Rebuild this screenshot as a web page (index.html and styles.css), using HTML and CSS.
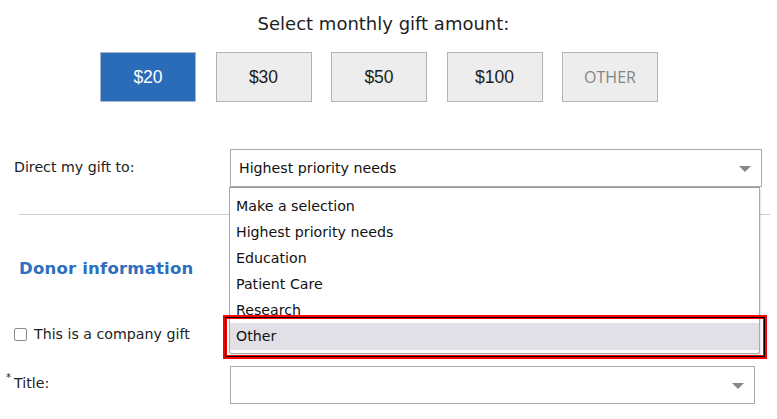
FILE: index.html
```html
<!DOCTYPE html>
<html>
<head>
<meta charset="utf-8">
<link rel="stylesheet" href="styles.css">
</head>
<body>
<div class="page">
  <h2 class="heading">Select monthly gift amount:</h2>
  <div class="amounts">
    <div class="amt active">$20</div>
    <div class="amt">$30</div>
    <div class="amt">$50</div>
    <div class="amt">$100</div>
    <div class="amt other">OTHER</div>
  </div>

  <div class="row direct">
    <div class="label">Direct my gift to:</div>
    <div class="field">
      <div class="select">
        <span>Highest priority needs</span>
        <span class="arrow"></span>
      </div>
      <ul class="options">
        <li>Make a selection</li>
        <li>Highest priority needs</li>
        <li>Education</li>
        <li>Patient Care</li>
        <li>Research</li>
        <li class="hover">Other</li>
      </ul>
      <div class="callout"></div>
    </div>
  </div>

  <hr class="divider">

  <h3 class="section">Donor information</h3>

  <label class="check"><span class="box"></span>This is a company gift</label>

  <div class="row title-row">
    <div class="label"><sup class="req">*</sup>Title:</div>
    <div class="field">
      <div class="select short">
        <span></span>
        <span class="arrow"></span>
      </div>
    </div>
  </div>
</div>
</body>
</html>
```

FILE: styles.css
```css
html, body {
  margin: 0;
  padding: 0;
  background: #fff;
}
body {
  font-family: "DejaVu Sans", Verdana, sans-serif;
  color: #222;
  width: 777px;
  height: 419px;
  overflow: hidden;
}
.page {
  position: relative;
}
.heading {
  margin: 0;
  padding-top: 13px;
  font-weight: normal;
  font-size: 18px;
  line-height: 22px;
  text-align: center;
  padding-right: 10px;
  color: #1e1e1e;
}
.amounts {
  display: flex;
  gap: 19.5px;
  margin-top: 17px;
  padding-left: 100px;
}
.amt {
  width: 94px;
  height: 48px;
  border: 1px solid #b3b3b3;
  background: #ededed;
  display: flex;
  align-items: center;
  justify-content: center;
  font-family: "Liberation Sans", Arial, sans-serif;
  font-size: 17.5px;
  color: #1c1c1c;
}
.amt.active {
  background: #2b6cb9;
  border-color: #a9b6c7;
  color: #fff;
}
.amt.other {
  color: #858585;
  font-family: "Open Sans", "Liberation Sans", sans-serif;
  font-size: 16px;
}
.row {
  display: grid;
  grid-template-columns: 216px 532px;
  padding-left: 14px;
}
.direct {
  margin-top: 47px;
}
.label {
  font-size: 14.2px;
  padding-top: 10px;
  color: #222;
}
.field {
  position: relative;
}
.select {
  height: 36px;
  border: 1px solid #aaa;
  display: flex;
  align-items: center;
  justify-content: space-between;
  padding: 0 10px 0 8px;
  font-size: 14.2px;
  color: #111;
  background: #fff;
}
.select.short {
  width: 505px;
}
.arrow {
  width: 0;
  height: 0;
  border-left: 6px solid transparent;
  border-right: 6px solid transparent;
  border-top: 6px solid #888;
  margin-top: 2px;
}
.options {
  position: absolute;
  left: -1px;
  top: 38px;
  width: 529px;
  margin: 0;
  padding: 5px 0 3px;
  list-style: none;
  background: #fff;
  border: 1px solid #aaa;
  border-top-color: #999;
  border-radius: 0 0 3px 3px;
  box-shadow: 1px 2px 2px rgba(0,0,0,0.12);
  z-index: 2;
  font-size: 14.2px;
  color: #111;
}
.options li {
  height: 26px;
  line-height: 26px;
  padding-left: 6px;
}
.options li.hover {
  background: #e0e0e6;
  height: 27px;
  line-height: 27px;
}
.callout {
  position: absolute;
  left: -7px;
  top: 166px;
  width: 540px;
  height: 40px;
  border: 2px solid #f00;
  box-shadow: inset 0 0 0 1px #000, inset 0 0 0 2px #f00;
  z-index: 3;
}
.divider {
  margin: 27px 7px 0 19px;
  border: 0;
  border-top: 1px solid #cfcfcf;
  height: 0;
}
.section {
  margin: 44px 0 0 19px;
  font-size: 16.5px;
  font-weight: bold;
  color: #2d6ebd;
  line-height: 20px;
  letter-spacing: 0.2px;
}
.check {
  display: flex;
  align-items: center;
  margin: 47px 0 0 14px;
  font-size: 14.2px;
  color: #222;
}
.box {
  width: 11px;
  height: 11px;
  border: 1.5px solid #8a8a94;
  border-radius: 2px;
  margin-right: 7px;
}
.title-row {
  margin-top: 24px;
}
.title-row .label {
  padding-top: 9px;
  position: relative;
}
.req {
  position: absolute;
  left: -8px;
  top: 7px;
  font-size: 10px;
  line-height: 10px;
}
```
